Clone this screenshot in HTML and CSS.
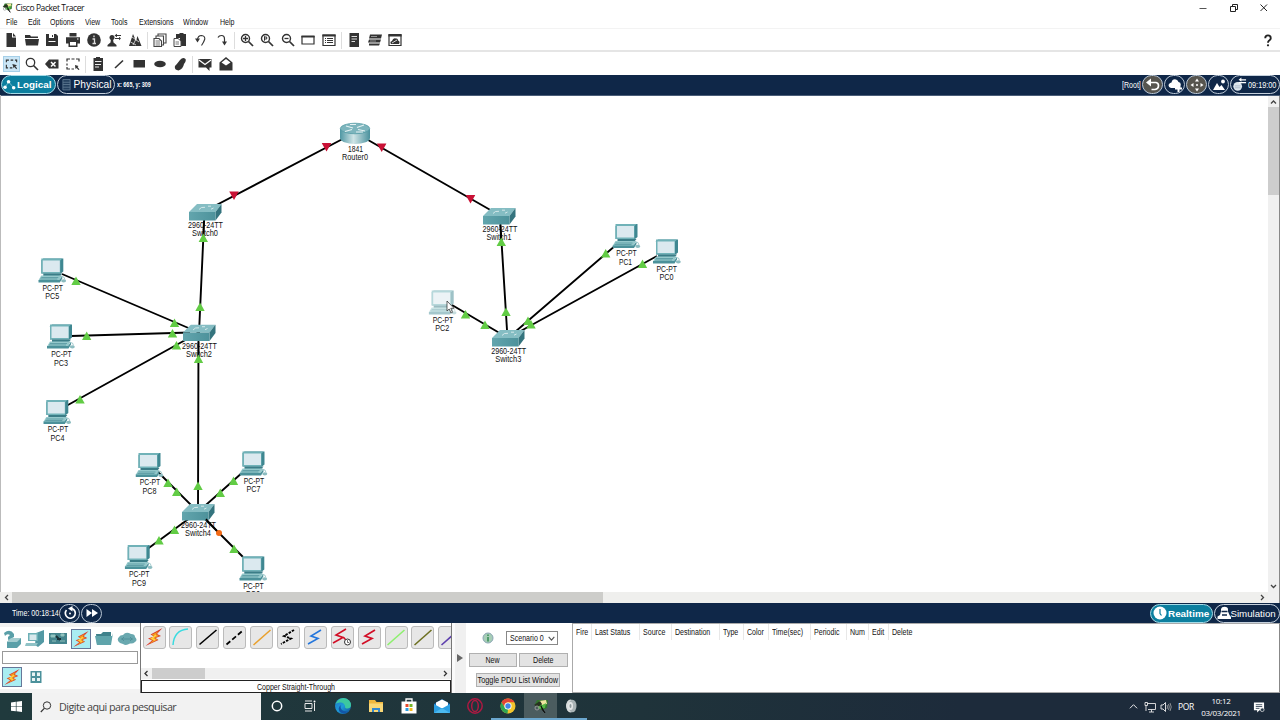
FILE: index.html
```html
<!DOCTYPE html>
<html lang="pt">
<head>
<meta charset="utf-8">
<title>Cisco Packet Tracer</title>
<link rel="stylesheet" href="styles.css">
</head>
<body>
<svg class="defs" aria-hidden="true">
  <defs>
    <linearGradient id="front" x1="0" x2="1"><stop offset="0" stop-color="#62a5ad"/><stop offset="1" stop-color="#4d929b"/></linearGradient>
    <linearGradient id="routerSide" x1="0" x2="1"><stop offset="0" stop-color="#4e97a3"/><stop offset=".45" stop-color="#cfe4e6"/><stop offset="1" stop-color="#4a919d"/></linearGradient>
    <linearGradient id="edgeG" x1="0" y1="0" x2="1" y2="1"><stop offset="0" stop-color="#1b72c4"/><stop offset=".5" stop-color="#1f9ad8"/><stop offset="1" stop-color="#0e4d94"/></linearGradient>
    <symbol id="pc" viewBox="0 0 30 28">
      <path d="M3 3 5 1H25V14L22.500 16H3Z" fill="#3f8791"/>
      <path d="M3 1H24L22 3V16H3Z" fill="#70b2b8"/>
      <path d="M4.500 3H21.500V14.500H4.500Z" fill="#dbe9ef"/>
      <path d="M5 16H24L22 18.500H5Z" fill="#3b7d87"/>
      <path d="M3 18 H23.500L21 23H0Z" fill="#94c8cb"/>
      <path d="M0 22.500H21L24 18.500V21L21.500 25H0Z" fill="#4b919a"/>
      <path d="M3 20H20M2 21.500H19" stroke="#4c8f99" stroke-width=".7"/>
      <path d="M21 18.500 25.500 19.500 26.500 22" fill="none" stroke="#8fc0c4" stroke-width=".8"/>
      <ellipse cx="25.300" cy="23.300" rx="2.500" ry="1.600" fill="#8cbcc0"/>
    </symbol>
    <symbol id="sw" viewBox="0 0 33 17">
      <path d="M0 8 8 0H32.500L26.500 8Z" fill="#85bdc3"/>
      <path d="M26.500 8 32.500 0V8.500L26.500 16.500Z" fill="#34747e"/>
      <path d="M0 8H26.500V16.500H0Z" fill="url(#front)"/>
      <path d="M10 5.500 12.500 3.500 16 3.300M19 2.200H22M22 5.200 24.500 4" fill="none" stroke="#dceced" stroke-width=".9"/>
    </symbol>
    <symbol id="bolt" viewBox="0 0 20 20">
      <path d="M18.500 1 6.500 7.500 10 9.500 4 11.500 8 13.500 1.500 19 14.500 13 11.500 11 17 9 13 7Z" fill="#d8372b"/>
      <path d="M15 4 7.500 7.800 11 9.500 5.500 11.500 9 13.500 5 17 13.500 12.800 10.500 11 15 9 12 7Z" fill="#f39a1f"/>
      <path d="M12 8 8 11.500 11 13" stroke="#ffd443" stroke-width="1.500" fill="none"/>
    </symbol>
    <symbol id="app" viewBox="0 0 16 16">
      <path d="M2 6 4 2 15 2 14 10 8 12Z" fill="#32772d"/>
      <path d="M6 3 13 2 14 6 9 7Z" fill="#efe6a0"/>
      <path d="M3 7 8 8 13 5 12 10 6 11Z" fill="#54b844"/>
      <path d="M1 7 7 3 9 6 5 9Z" fill="#27321f"/>
      <path d="M8 8 12 15 9.500 12Z" fill="#111" stroke="#111"/>
      <circle cx="4" cy="10" r="2" fill="none" stroke="#999"/>
    </symbol>
    <symbol id="lens" viewBox="0 0 14 14"><circle cx="5.500" cy="5.500" r="4" fill="none" stroke="#333" stroke-width="1.400"/><path d="M8.500 8.500 13 13" stroke="#333" stroke-width="1.700"/></symbol>
    <symbol id="up" viewBox="-5 -5 10 10"><path d="M0-4.500 4.700 4H-4.700Z" fill="#62cc45"/></symbol>
    <symbol id="down" viewBox="-5 -5 10 10"><path d="M0 4.500 4.800-4H-4.800Z" fill="#c91135"/></symbol>
  </defs>
</svg>

<div class="window">
  <header class="titlebar">
    <svg class="applogo"><use href="#app"/></svg>
    <span class="apptitle">Cisco Packet Tracer</span>
    <div class="winbtns">
      <svg viewBox="0 0 10 10"><path d="M1.500 5.500H8.500" stroke="#555"/></svg>
      <svg viewBox="0 0 10 10"><path d="M1.500 3.500H6.500V8.500H1.500ZM3.500 3.500V1.500H8.500V6.500H6.500" fill="none" stroke="#222"/></svg>
      <svg viewBox="0 0 10 10"><path d="M1.500 1.500 8 8M8 1.500 1.500 8" stroke="#222"/></svg>
    </div>
  </header>
  <nav class="menu">
    <span style="width:22px"><b class="t">File</b></span><span style="width:22px"><b class="t">Edit</b></span><span style="width:35px"><b class="t">Options</b></span><span style="width:26px"><b class="t">View</b></span><span style="width:28px"><b class="t">Tools</b></span><span style="width:44.500px"><b class="t">Extensions</b></span><span style="width:36.500px"><b class="t">Window</b></span><span><b class="t">Help</b></span>
  </nav>

  <div class="toolbar first">
    <i><svg viewBox="0 0 14 14"><path d="M2.500 0H8V4.500H12V14H2.500ZM9 0 12 3.500H9Z" fill="#333"/></svg></i>
    <i><svg viewBox="0 0 14 14"><path d="M0 2H5L6 3.500H13V5H0ZM0 6H14L13 12.500H1Z" fill="#333"/></svg></i>
    <i><svg viewBox="0 0 14 14"><path fill-rule="evenodd" d="M1 1H11L13 3V13H1ZM4 1V5H9V1ZM7 2H8V4H7ZM3.500 8V9H10.500V8Z" fill="#333"/></svg></i>
    <i><svg viewBox="0 0 14 14"><path fill-rule="evenodd" d="M3.500 0H10.500V3.500H3.500ZM0 4.300H14V10.500H11.500V14H2.500V10.500H0ZM4 9V12.500H10V9ZM11 5.500V6.500H12.500V5.500Z" fill="#333"/></svg></i>
    <i><svg viewBox="0 0 14 14"><circle cx="7" cy="7" r="6.800" fill="#333"/><path d="M7 2.500V4.300M5.500 6H7.500V10.500M5.500 10.500H9" stroke="#ddd" stroke-width="1.300" fill="none"/></svg></i>
    <i><svg viewBox="0 0 14 14"><circle cx="5" cy="4.500" r="2.500" fill="#333"/><path d="M4 6H6L6.500 9.500 9.500 12V13.500H.5V12L3.500 9.500Z" fill="#333"/><path d="M8.500 2.500H14M8 5.500H13" stroke="#333" stroke-width="1"/><path d="M10 .8 7.500 2.500 10 4.200ZM12 3.800 14 5.500 12 7.200Z" fill="#333"/></svg></i>
    <i><svg viewBox="0 0 14 14"><path d="M1 13 5 1 8 8 9.500 3 13.500 13Z" fill="#333"/><path d="M2.500 9 8 12M4 4 11 9M5 12 8 6" stroke="#fff" stroke-width=".7"/></svg></i>
    <s></s>
    <i><svg viewBox="0 0 14 14"><path d="M5 3V1H13V10H10.500M3 5V3H10.500V12H8.500M1 5.500H6L8.500 8V13.500H1Z" fill="#fff" stroke="#444" stroke-width="1.100"/><path d="M2.500 8H7M2.500 10H7M2.500 12H7" stroke="#777"/></svg></i>
    <i><svg viewBox="0 0 14 14"><path d="M3 1H6L7 0H10L11 1H13V13H7V5H3Z" fill="#333"/><path d="M1 5.500H5L8 8V13.500H1Z" fill="#fff" stroke="#444"/><path d="M2.500 9H6M2.500 11H6" stroke="#777"/></svg></i>
    <i><svg viewBox="0 0 14 14"><path d="M3.500 6.500Q4 2.500 7.500 2.500Q11 2.800 10.800 6Q10 9 7.500 12.500" fill="none" stroke="#333" stroke-width="1.100"/><path d="M1 5.500H6L3.500 9.500Z" fill="#333"/></svg></i>
    <i><svg viewBox="0 0 14 14"><path d="M3 4.500Q4 2.500 6.500 2.500Q9.500 2.500 9.500 6V10" fill="none" stroke="#333" stroke-width="1.200"/><path d="M7 8.500H12L9.500 12.500Z" fill="#333"/></svg></i>
    <s></s>
    <i><svg viewBox="0 0 14 14"><use href="#lens"/><path d="M3 5.500H8M5.500 3V8" stroke="#333" stroke-width="1.300"/></svg></i>
    <i><svg viewBox="0 0 14 14"><use href="#lens"/><path d="M4.500 3.300V7.700M4.500 4H6.700V6H4.500" stroke="#333" stroke-width="1" fill="none"/></svg></i>
    <i><svg viewBox="0 0 14 14"><use href="#lens"/><path d="M3.500 5.500H7.500" stroke="#333" stroke-width="1.300"/></svg></i>
    <i><svg viewBox="0 0 14 14"><path d="M1 3.500H13V11H1Z" fill="#fff" stroke="#333" stroke-width="1.200"/><path d="M.4 3.500H13.600" stroke="#333" stroke-width="2"/></svg></i>
    <i><svg viewBox="0 0 14 14"><path d="M1 2H13V12.500H1Z" fill="#fff" stroke="#333" stroke-width="1.200"/><path d="M.4 2.500H13.600" stroke="#333" stroke-width="2"/><path d="M3 5.500H4M3 7.500H4M3 9.500H4M5 5.500H11M5 7.500H11M5 9.500H11" stroke="#333"/></svg></i>
    <s></s>
    <i><svg viewBox="0 0 14 14"><path d="M2.500 0H12V14H2.500Z" fill="#333"/><path d="M4.500 3.500H10M4.500 6H10M4.500 8.500H8" stroke="#ddd"/></svg></i>
    <i><svg viewBox="0 0 14 14"><path d="M2 1.500H14L13 5.500H1ZM1 6.500H13L12 9.500H0ZM1 10.500H12L11 12.500H1Z" fill="#333"/><path d="M3 3.500H9M2 8H8" stroke="#aaa" stroke-width=".8"/></svg></i>
    <i><svg viewBox="0 0 14 14"><path d="M1 1.500H13V12.500H1Z" fill="#fff" stroke="#333" stroke-width="1.200"/><path d="M.4 2.500H13.600" stroke="#333" stroke-width="2"/><path d="M3 11Q1.500 8.500 4 8Q5 4.500 8 5.500Q10 5 10 7.500Q12.500 8.500 11 11Z" fill="#333"/><path d="M4 10 9 7" stroke="#fff" stroke-width=".8"/></svg></i>
    <span class="help"><svg viewBox="0 0 14 14"><path d="M4 4.500Q4 1.500 7 1.500Q10 1.500 10 4.500Q10 6 8 7.200Q7 8 7 9.500" fill="none" stroke="#222" stroke-width="2"/><circle cx="7" cy="12.200" r="1.200" fill="#222"/></svg></span>
  </div>
  <div class="toolbar">
    <i class="sel"><svg viewBox="0 0 14 14"><path d="M1 5V2.500H4M6 2.500H9M11 2.500H13V5M1 8V11.500H3M5 11.500H8" fill="none" stroke="#333" stroke-width="1.300"/><path d="M8 7 13.500 8.500 11.500 9.500 13.500 12 12.500 13 10.500 10.500 9.500 12Z" fill="#333"/></svg></i>
    <i><svg viewBox="0 0 14 14"><circle cx="5.500" cy="5.500" r="4.200" fill="none" stroke="#333" stroke-width="1.300"/><path d="M8.500 8.500 13 13" stroke="#333" stroke-width="1.600"/></svg></i>
    <i><svg viewBox="0 0 14 14"><path d="M0 7 4 2.500H13.500V11.500H4Z" fill="#333"/><path d="M6 5 10.500 9.500M10.500 5 6 9.500" stroke="#fff" stroke-width="1.500"/></svg></i>
    <i><svg viewBox="0 0 14 14"><path d="M1 4.500V2H4M5.500 2H8.500M10 2H13V4.500M1 6.500V8.500M1 10V12H4M5.500 12H8" fill="none" stroke="#333" stroke-width="1.200"/><path d="M9 8 12.500 9 11.500 10 13.500 12.500 12.500 13 10.500 11 9.500 12Z" fill="#333"/></svg></i>
    <s></s>
    <i><svg viewBox="0 0 14 14"><path d="M2.500 1H5V0H9V1H12V14H2.500Z" fill="#333"/><path d="M4 4.500H10.500M4 7.500H10M4 10H8" stroke="#eee" stroke-width="1.100"/></svg></i>
    <i><svg viewBox="0 0 14 14"><path d="M3 11 11 3.500" stroke="#333" stroke-width="1.600"/></svg></i>
    <i><svg viewBox="0 0 14 14"><path d="M1.500 3H13V10.500H1.500Z" fill="#333"/></svg></i>
    <i><svg viewBox="0 0 14 14"><ellipse cx="7" cy="7" rx="5.800" ry="3.300" fill="#333"/></svg></i>
    <i><svg viewBox="0 0 14 14"><path d="M7 3Q10-.5 12.500 2Q13.500 4 11 7Q10 12 5.500 13.500Q1 13 2 9Q4 7 7 3Z" fill="#333"/></svg></i>
    <s></s>
    <i><svg viewBox="0 0 14 14"><path d="M.5 2H13.500V10.500H11.500V14L8 10.500H.5Z" fill="#333"/><path d="M1 3 7 7.500 13 3" stroke="#fff" stroke-width="1.300" fill="none"/></svg></i>
    <i><svg viewBox="0 0 14 14"><path d="M.5 5.500 7 0 13.500 5.500V13.500H.5Z" fill="#333"/><path d="M2.500 5.500 7 2 11.500 5.500 7 8.500Z" fill="#fff"/></svg></i>
  </div>

  <div class="navy nav">
    <div class="pill on logical"><svg viewBox="0 0 14 12"><path d="M2 9 6 2.500 11.500 9" fill="none" stroke="#9fd3e0" stroke-width=".7"/><circle cx="2.200" cy="8.500" r="1.900" fill="#fff"/><circle cx="6" cy="2.500" r="1.900" fill="#fff"/><circle cx="11.500" cy="9" r="1.900" fill="#fff"/></svg>Logical</div>
    <div class="pill physical"><svg viewBox="0 0 10 13"><path d="M1 1H9V12.500H1Z" fill="#24405f" stroke="#5c7790"/><path d="M1 4H9M1 6.500H9M1 9.500H9" stroke="#5c7790"/></svg>Physical</div>
    <b class="t coord">x: 665, y: 309</b>
    <div class="navright">
      <b class="t root">[Root]</b>
      <div class="round gray"><svg viewBox="0 0 14 14"><path d="M3 4.500H10Q12.500 5 12.500 7.500Q12.500 11 9 11.500H5.500" fill="none" stroke="#fff" stroke-width="1.700"/><path d="M5 .5V8.500L0 4.500Z" fill="#fff"/></svg></div>
      <div class="round"><svg viewBox="0 0 14 14"><path d="M3 10Q-.5 9 1 6Q2 4.500 3.500 4.500Q4.500 .5 8 1.500Q10 2 10.500 4Q13.500 4.500 12.500 8V10Z" fill="#fff"/><path d="M10.500 7V14M7 10.500H14" stroke="#fff" stroke-width="2"/></svg></div>
      <div class="round gray"><svg viewBox="0 0 14 14"><path d="M7 .5 9 3.500H5ZM7 13.500 5 10.500H9ZM.5 7 3.500 5V9ZM13.500 7 10.500 9V5Z" fill="#fff"/><circle cx="7" cy="7" r="1" fill="#fff"/></svg></div>
      <div class="round"><svg viewBox="0 0 14 14"><path d="M1 12 5 5 7.500 9 9.500 7 13 12Z" fill="#fff"/><circle cx="11" cy="3.500" r="1.900" fill="#fff"/></svg></div>
      <div class="pill clock"><svg viewBox="0 0 15 15"><circle cx="5" cy="9.500" r="4.700" fill="#dce5ec"/><path d="M2 9H8M2 11H8" stroke="#9aaabb" stroke-width=".7"/><path d="M6 5.500H14M8 2.500H14" stroke="#fff" stroke-width="1.200"/><path d="M9 0 6 2.500 9 4.500Z" fill="#fff"/></svg><b class="t">09:19:00</b></div>
    </div>
  </div>

  <main class="work">
    <svg class="canvas" viewBox="0 95 1268 497">
      <path d="M.5 95V592" stroke="#bbb"/>
      <g class="labels">
        <text x="355.500" y="151.800" textLength="15" lengthAdjust="spacingAndGlyphs">1841</text><text x="355" y="160.200" textLength="26" lengthAdjust="spacingAndGlyphs">Router0</text>
      </g>
      <path class="links" d="M355 132.500 205 211M355 132.500 500 215.500M204.500 212 199 333M500 217 507.500 338M198.500 333 198 512M62 274 199 332.500M71 336 190 332.500M67 405.500 198 333M616 245 508 338M657 256 508 338M452 305 508 338M158 472 198 512M243 472 198 512M146 550 198 512M198 512 243 557"/>
      <g>
        <path d="M340 129V138A15 6 0 0 0 370 138V129Z" fill="url(#routerSide)"/>
        <ellipse cx="355" cy="128.500" rx="14.700" ry="5.300" fill="#7db5bd" stroke="#4f98a2" stroke-width=".7"/>
        <path d="M346 126 353 128M350 124.500H356M364 125 357 127.500M345 131.500 352 129.500M365 131 358 129.500M356 132H363" fill="none" stroke="#e5f2f3" stroke-width="1.100"/>
      </g>
      <g>
        <use href="#sw" x="189" y="204" width="33" height="17"/><use href="#sw" x="483" y="208" width="33" height="17"/><use href="#sw" x="183" y="324.500" width="33" height="17"/><use href="#sw" x="492" y="330" width="33" height="17"/><use href="#sw" x="182" y="504" width="33" height="17"/>
      </g>
      <g>
        <use href="#pc" x="38.300" y="257.500" width="30" height="28"/><use href="#pc" x="47" y="323.500" width="30" height="28"/><use href="#pc" x="43.300" y="399" width="30" height="28"/><use href="#pc" x="135.500" y="452" width="30" height="28"/><use href="#pc" x="239.500" y="450.500" width="30" height="28"/><use href="#pc" x="124.700" y="544" width="30" height="28"/><use href="#pc" x="239.300" y="555.500" width="30" height="28"/><use href="#pc" x="612.500" y="223" width="30" height="28"/><use href="#pc" x="653" y="238.500" width="30" height="28"/><use href="#pc" x="428.700" y="289.500" width="30" height="28" opacity=".5"/>
      </g>
      <g class="labels">
        <text x="205.500" y="227.800" textLength="35" lengthAdjust="spacingAndGlyphs">2960-24TT</text><text x="205" y="236.300" textLength="26" lengthAdjust="spacingAndGlyphs">Switch0</text>
        <text x="500" y="232" textLength="35" lengthAdjust="spacingAndGlyphs">2960-24TT</text><text x="499" y="240.300" textLength="25" lengthAdjust="spacingAndGlyphs">Switch1</text>
        <text x="199.500" y="348.500" textLength="35" lengthAdjust="spacingAndGlyphs">2960-24TT</text><text x="199" y="357" textLength="26" lengthAdjust="spacingAndGlyphs">Switch2</text>
        <text x="508.700" y="354" textLength="35" lengthAdjust="spacingAndGlyphs">2960-24TT</text><text x="508.300" y="362.300" textLength="26" lengthAdjust="spacingAndGlyphs">Switch3</text>
        <text x="198.500" y="528" textLength="35" lengthAdjust="spacingAndGlyphs">2960-24TT</text><text x="198" y="536.300" textLength="26" lengthAdjust="spacingAndGlyphs">Switch4</text>
        <text x="52.700" y="291" textLength="20.500" lengthAdjust="spacingAndGlyphs">PC-PT</text><text x="52.300" y="299.300" textLength="14" lengthAdjust="spacingAndGlyphs">PC5</text>
        <text x="61.500" y="357" textLength="20.500" lengthAdjust="spacingAndGlyphs">PC-PT</text><text x="61" y="365.500" textLength="14" lengthAdjust="spacingAndGlyphs">PC3</text>
        <text x="58" y="432" textLength="20.500" lengthAdjust="spacingAndGlyphs">PC-PT</text><text x="57.500" y="440.500" textLength="14" lengthAdjust="spacingAndGlyphs">PC4</text>
        <text x="150" y="485" textLength="20.500" lengthAdjust="spacingAndGlyphs">PC-PT</text><text x="149.500" y="493.500" textLength="14" lengthAdjust="spacingAndGlyphs">PC8</text>
        <text x="254" y="483.500" textLength="20.500" lengthAdjust="spacingAndGlyphs">PC-PT</text><text x="253.500" y="492" textLength="14" lengthAdjust="spacingAndGlyphs">PC7</text>
        <text x="139.300" y="577" textLength="20.500" lengthAdjust="spacingAndGlyphs">PC-PT</text><text x="139" y="585.500" textLength="14" lengthAdjust="spacingAndGlyphs">PC9</text>
        <text x="253.500" y="588.500" textLength="20.500" lengthAdjust="spacingAndGlyphs">PC-PT</text><text x="253" y="596.500" textLength="14" lengthAdjust="spacingAndGlyphs">PC6</text>
        <text x="626.500" y="256" textLength="20.500" lengthAdjust="spacingAndGlyphs">PC-PT</text><text x="625.500" y="264.500" textLength="13" lengthAdjust="spacingAndGlyphs">PC1</text>
        <text x="666.800" y="271.500" textLength="20.500" lengthAdjust="spacingAndGlyphs">PC-PT</text><text x="666.500" y="280" textLength="14" lengthAdjust="spacingAndGlyphs">PC0</text>
        <text x="443" y="322.500" textLength="20.500" lengthAdjust="spacingAndGlyphs">PC-PT</text><text x="442.300" y="331" textLength="14" lengthAdjust="spacingAndGlyphs">PC2</text>
      </g>
      <path class="links thin" d="M203.800 221 203.300 238M500.300 225 501 242M198.500 342V359M206 519 219 533"/>
      <g>
        <use href="#up" x="198.300" y="233" width="10" height="10"/><use href="#up" x="195" y="302" width="10" height="10"/><use href="#up" x="496.300" y="237" width="10" height="10"/><use href="#up" x="501" y="307" width="10" height="10"/><use href="#up" x="460.500" y="309.500" width="10" height="10"/><use href="#up" x="480" y="320" width="10" height="10"/><use href="#up" x="600.700" y="248.500" width="10" height="10"/><use href="#up" x="637.500" y="259" width="10" height="10"/><use href="#up" x="523" y="316" width="10" height="10"/><use href="#up" x="526" y="319.500" width="10" height="10"/><use href="#up" x="71" y="276" width="10" height="10"/><use href="#up" x="169.500" y="318" width="10" height="10"/><use href="#up" x="81.700" y="331" width="10" height="10"/><use href="#up" x="167.500" y="328.500" width="10" height="10"/><use href="#up" x="75" y="394.500" width="10" height="10"/><use href="#up" x="171.500" y="340.500" width="10" height="10"/><use href="#up" x="193.500" y="354" width="10" height="10"/><use href="#up" x="193" y="481" width="10" height="10"/><use href="#up" x="163" y="478" width="10" height="10"/><use href="#up" x="171.700" y="487" width="10" height="10"/><use href="#up" x="228.500" y="476" width="10" height="10"/><use href="#up" x="215.300" y="488" width="10" height="10"/><use href="#up" x="169.500" y="525" width="10" height="10"/><use href="#up" x="154" y="535.500" width="10" height="10"/><use href="#up" x="229" y="544" width="10" height="10"/>
        <circle cx="219" cy="533" r="3" fill="#f26a16"/>
        <use href="#down" x="321.500" y="142" width="10" height="10"/><use href="#down" x="229" y="190.500" width="10" height="10"/><use href="#down" x="376.700" y="142.500" width="10" height="10"/><use href="#down" x="465.500" y="194" width="10" height="10"/>
      </g>
      <path d="M447 301V311L449.200 309 451 313 452.500 312.300 450.800 308.300H454Z" fill="#fff" stroke="#222" stroke-width=".7"/>
    </svg>
    <div class="vscroll">
      <svg viewBox="0 0 11 11"><path d="M3 7.500 5.500 5 8 7.500" fill="none" stroke="#444" stroke-width="1.300"/></svg>
      <div class="vthumb"></div>
      <svg class="end" viewBox="0 0 11 11"><path d="M3 4 5.500 6.500 8 4" fill="none" stroke="#444" stroke-width="1.300"/></svg>
    </div>
    <div class="hscroll">
      <svg viewBox="0 0 11 11"><path d="M7 3 4.500 5.500 7 8" fill="none" stroke="#444" stroke-width="1.300"/></svg>
      <div class="hthumb"></div>
      <svg class="end" viewBox="0 0 11 11"><path d="M4 3 6.500 5.500 4 8" fill="none" stroke="#444" stroke-width="1.300"/></svg>
    </div>
    <div class="corner"></div>
  </main>

  <div class="navy timebar">
    <span class="time"><b class="t">Time: 00:18:14</b></span>
    <div class="round"><svg viewBox="0 0 14 14"><path d="M3.500 4A5 5 0 1 0 9 2.500" fill="none" stroke="#fff" stroke-width="1.700"/><path d="M9.500 0 5 2.500 9.500 5.500Z" fill="#fff"/><circle cx="7" cy="7.500" r="1" fill="#fff"/></svg></div>
    <div class="round"><svg viewBox="0 0 14 14"><path d="M1.500 3 7 7 1.500 11ZM7 3 13 7 7 11Z" fill="#fff"/></svg></div>
    <div class="modes">
      <div class="pill on realtime"><svg viewBox="0 0 14 14"><circle cx="7" cy="7" r="6.500" fill="#fff"/><path d="M7 3V7.500L8.500 9.500" fill="none" stroke="#0c7c9a" stroke-width="1.200"/></svg>Realtime</div>
      <div class="pill simulation"><svg viewBox="0 0 14 14"><path d="M4 5.500V3Q4.500 .8 7.500 .8Q11 .8 11 3.500V5.500L12.500 9L14 11V13H.5V10.500L3 9Z" fill="#fff"/><path d="M4.500 5.500H10.500M5 9H10" stroke="#12294a" stroke-width="1.300"/></svg>Simulation</div>
    </div>
  </div>

  <section class="bottom">
    <div class="devices">
      <div class="devrow">
        <svg viewBox="0 0 20 20"><path d="M2 4Q8-1 12 5V8L6 11V8L8 6Q5 4 3 7ZM5 13 9 9H19V15L15 19H5Z" fill="#5a9fa8"/><path d="M5 13 9 9H19L15 13Z" fill="#a5cdd0"/></svg>
        <svg viewBox="0 0 20 20"><path d="M11 4 19 1V13L13 18 10 16Z" fill="#5399a4"/><path d="M3 4H13V12H3Z" fill="#6db0b6"/><path d="M4.500 5.500H11.500V11H4.500Z" fill="#d9e8ec"/><path d="M1 14H13L11 17H0Z" fill="#8fc2c6"/></svg>
        <svg viewBox="0 0 20 20"><path d="M1 4H19V15H1Z" fill="#44848d"/><path d="M3 6H7V8H3ZM13 5H16V7H13ZM4 12H8M12 12H17" fill="#93c8c8" stroke="#8fbfba"/><path d="M8 7 12 11M9 10H13" stroke="#192f35" stroke-width="1.800"/></svg>
        <svg class="chosen" viewBox="0 0 20 20"><use href="#bolt"/></svg>
        <svg viewBox="0 0 20 20"><path d="M2 5H7L9 3H17V16H3Z" fill="#3f828c"/><path d="M1 7H18L19 4 17 16H3Z" fill="#5fa4ab"/></svg>
        <svg viewBox="0 0 20 20"><path d="M3 14Q-1 11 2 8Q3 6 6 6Q9 2 14 5Q18 5 18 8Q21 11 18 13Q16 15 13 14.500Q9 17 6 15Z" fill="#69a8af"/><path d="M4 10H16M7 8 5 10 7 12M13 8 15 10 13 12" fill="none" stroke="#4b8c95" stroke-width=".8"/></svg>
      </div>
      <div class="field"></div>
      <div class="devrow two">
        <svg class="chosen" viewBox="0 0 20 20"><use href="#bolt"/></svg>
        <svg viewBox="0 0 20 20"><path d="M4.500 4H15.500V16H4.500Z" fill="#4b919b"/><path d="M6 5.500H9V9H6ZM11 5.500H14V9H11ZM6 11H9V14H6ZM11 11H14V14H11Z" fill="#e9f5f5"/></svg>
      </div>
    </div>
    <div class="cables">
      <div class="cablerow">
        <i><svg viewBox="0 0 20 20"><use href="#bolt"/></svg></i>
        <i><svg viewBox="0 0 20 20"><path d="M2 18Q3 3 17 2" stroke="#3adbe0" stroke-width="1.500" fill="none"/></svg></i>
        <i><svg viewBox="0 0 20 20"><path d="M1.500 17.500 18.500 3" stroke="#000" stroke-width="1.600" fill="none"/></svg></i>
        <i><svg viewBox="0 0 20 20"><path d="M1.500 17.500 18.500 3" stroke="#000" stroke-width="1.700" fill="none" stroke-dasharray="5 2.500"/></svg></i>
        <i><svg viewBox="0 0 20 20"><path d="M1.500 18 18.500 3" stroke="#e9a02c" stroke-width="1.500" fill="none"/></svg></i>
        <i><svg viewBox="0 0 20 20"><path d="M16 3 6 9 13 11.500 3 17" stroke="#000" stroke-width="1.900" fill="none" stroke-dasharray="2.500 1.200"/></svg></i>
        <i><svg viewBox="0 0 20 20"><path d="M16 3 6 9 13 11.500 3 17" stroke="#2476dc" stroke-width="1.600" fill="none"/></svg></i>
        <i><svg viewBox="0 0 20 20"><path d="M14 2 4 8 11 10.500 1 16M11 10 14 13" stroke="#d20e26" stroke-width="1.600" fill="none"/><circle cx="15.500" cy="15" r="3" fill="#fff" stroke="#333"/><path d="M15.500 13V15.500H17" fill="none" stroke="#333" stroke-width=".7"/></svg></i>
        <i><svg viewBox="0 0 20 20"><path d="M16 3 6 9 13 11.500 3 17" stroke="#d20e26" stroke-width="1.700" fill="none"/></svg></i>
        <i><svg viewBox="0 0 20 20"><path d="M1.500 18 18.500 3" stroke="#8df06e" stroke-width="1.600" fill="none"/></svg></i>
        <i><svg viewBox="0 0 20 20"><path d="M1.500 18 18.500 3" stroke="#6d7021" stroke-width="1.600" fill="none"/></svg></i>
        <i><svg viewBox="0 0 20 20"><path d="M1.500 18 18.500 3" stroke="#5d3fae" stroke-width="1.600" fill="none"/></svg></i>
      </div>
      <div class="cscroll">
        <svg viewBox="0 0 11 11"><path d="M6.500 3 4 5.500 6.500 8" fill="none" stroke="#333" stroke-width="1.300"/></svg>
        <div class="cthumb"></div>
        <svg class="end" viewBox="0 0 11 11"><path d="M4 3 6.500 5.500 4 8" fill="none" stroke="#333" stroke-width="1.300"/></svg>
      </div>
      <div class="cname"><b class="t mid">Copper Straight-Through</b></div>
    </div>
    <div class="splitter"><svg viewBox="0 0 6 8"><path d="M0 0 6 4 0 8Z" fill="#666"/></svg></div>
    <div class="scenario">
      <div class="srow">
        <svg class="info" viewBox="0 0 12 12"><circle cx="6" cy="6" r="5" fill="#a6cdb6" stroke="#8aa5b4"/><path d="M6 2.500V4M6 5V9.500" stroke="#3b8f5a" stroke-width="1.600"/></svg>
        <div class="select"><b class="t">Scenario 0</b><svg viewBox="0 0 8 8"><path d="M1.500 2.500 4 5.500 6.500 2.500" fill="none" stroke="#555"/></svg></div>
      </div>
      <div class="srow btns"><div class="btn"><b class="t mid">New</b></div><div class="btn"><b class="t mid">Delete</b></div></div>
      <div class="btn toggle"><b class="t mid">Toggle PDU List Window</b></div>
    </div>
    <div class="pdu">
      <span style="width:18.500px"><b class="t">Fire</b></span><span style="width:48px"><b class="t">Last Status</b></span><span style="width:32px"><b class="t">Source</b></span><span style="width:48px"><b class="t">Destination</b></span><span style="width:24px"><b class="t">Type</b></span><span style="width:25px"><b class="t">Color</b></span><span style="width:42px"><b class="t">Time(sec)</b></span><span style="width:36px"><b class="t">Periodic</b></span><span style="width:22px"><b class="t">Num</b></span><span style="width:20px"><b class="t">Edit</b></span><span class="last"><b class="t">Delete</b></span>
    </div>
  </section>

  <footer class="taskbar">
    <div class="start"><svg viewBox="0 0 12 12"><path d="M0 1.500 5.300 .8V5.600H0ZM6 .7 12 0V5.600H6ZM0 6.400H5.300V11.200L0 10.500ZM6 6.400H12V12L6 11.300Z" fill="#fff"/></svg></div>
    <div class="search"><svg viewBox="0 0 12 12"><circle cx="7" cy="4.500" r="3.700" fill="none" stroke="#333"/><path d="M4.300 7.300 .8 11" stroke="#333" stroke-width="1.200"/></svg><span>Digite aqui para pesquisar</span></div>
    <div class="tasks">
      <i><svg viewBox="0 0 18 18"><circle cx="9" cy="9" r="4.700" fill="none" stroke="#fff" stroke-width="1.500"/></svg></i>
      <i><svg viewBox="0 0 18 18"><path d="M4 4H11M4 14H11M4 6.500H11V11.500H4ZM13.500 6V14" fill="none" stroke="#e8e8e8"/><circle cx="13.500" cy="4.500" r="1" fill="#fff"/></svg></i>
      <i><svg viewBox="0 0 18 18"><circle cx="9" cy="9" r="8" fill="url(#edgeG)"/><path d="M1.500 7Q4 1 9.500 1Q17 2 17 8.500Q16.500 12 12.500 11.500Q10.500 11 11 9Q10 5 6 5.500Q3 5.500 1.500 7Z" fill="#3cc7a0"/><path d="M6.500 8Q6 15 14 14.500Q10 18 6 15Q3 12 6.500 8Z" fill="#1256a8"/></svg></i>
      <i><svg viewBox="0 0 18 18"><path d="M2 3H8L9.500 5H16V15H2Z" fill="#efb73e"/><path d="M2 6.500H16V15H2Z" fill="#f9d877"/><path d="M5 15V11H13V15H11V13H7V15Z" fill="#3388ce"/></svg></i>
      <i><svg viewBox="0 0 18 18"><path d="M6 5V2H12V5" fill="none" stroke="#fff" stroke-width="1.300"/><path d="M1.500 4.500H16.500V16.500H1.500Z" fill="#fff"/><path d="M5.500 7H8.500V10H5.500Z" fill="#e84b2c"/><path d="M9.500 7H12.500V10H9.500Z" fill="#75b72a"/><path d="M5.500 11H8.500V14H5.500Z" fill="#2a9de0"/><path d="M9.500 11H12.500V14H9.500Z" fill="#f5b91d"/></svg></i>
      <i><svg viewBox="0 0 18 18"><path d="M1 7 9 2 17 7V16H1Z" fill="#1767ae"/><path d="M3 5.500 9 2.500 15 5.500V11H3Z" fill="#fff"/><path d="M1 7 9 11.500 17 7V16H1Z" fill="#2c9fe2"/><path d="M1 16 9 11 17 16Z" fill="#4bb9ef"/></svg></i>
      <i><svg viewBox="0 0 18 18"><circle cx="9" cy="9" r="7.200" fill="none" stroke="#ad1942" stroke-width="1.500"/><ellipse cx="9" cy="9" rx="3.300" ry="5.500" fill="none" stroke="#ad1942" stroke-width="1.500"/></svg></i>
      <i class="run"><svg viewBox="0 0 18 18"><circle cx="9" cy="9" r="7.500" fill="#f2c52d"/><path d="M2.500 5.200A7.500 7.500 0 0 1 15.500 5.200H9Q5.500 5.500 5.300 10Z" fill="#e34435"/><path d="M2.500 5.200 6 11 9 12.500 8.500 16.500A7.500 7.500 0 0 1 2.500 5.200Z" fill="#2fa552"/><circle cx="9" cy="9" r="3.600" fill="#fff"/><circle cx="9" cy="9" r="2.700" fill="#4285e4"/></svg></i>
      <i class="run active"><svg viewBox="-1 -1 18 18"><use href="#app" width="16" height="16"/></svg></i>
      <i class="run late"><svg viewBox="0 0 18 18"><ellipse cx="7.500" cy="9" rx="4.500" ry="6.500" fill="#d8dcdd"/><ellipse cx="9.500" cy="9" rx="4" ry="6.300" fill="#a9b3b5"/><ellipse cx="7.500" cy="9" rx="2.500" ry="4" fill="#e4e7e8"/><ellipse cx="7.500" cy="9" rx="1" ry="2" fill="#8d999b"/></svg></i>
    </div>
    <div class="tray">
      <svg class="chev" viewBox="0 0 10 10"><path d="M1 7 5 3 9 7" fill="none" stroke="#fff"/></svg>
      <svg class="net" viewBox="0 0 12 12"><path d="M3.500 2.500H11.500V8.500H4M5 11H10M7.500 8.500V11M1 1.500H3.500V4.500H1ZM2 4.500V10" fill="none" stroke="#e8e8e8" stroke-width=".9"/></svg>
      <svg class="vol" viewBox="0 0 12 12"><path d="M1 4H3L5.500 1.500V10.500L3 8H1Z" fill="none" stroke="#eee" stroke-width=".9"/><path d="M7 4Q8 6 7 8M8.500 3Q10 6 8.500 9M10 2Q12.500 6 10 10" fill="none" stroke="#aaa" stroke-width=".8"/></svg>
      <span class="lang">POR</span>
      <div class="date"><span>10:12</span><span>03/03/2021</span></div>
      <svg class="note" viewBox="0 0 13 13"><path d="M1 1.500H12V10H7L4.500 12.500V10H1Z" fill="#fff"/><path d="M3 4H10M3 6H10M3 8H7" stroke="#25384a" stroke-width=".9"/><circle cx="10" cy="9.500" r="2" fill="#25384a" stroke="#ddd" stroke-width=".8"/></svg>
    </div>
  </footer>
</div>
</body>
</html>
```
FILE: styles.css
```css
* { box-sizing: border-box; }
body { margin: 0; font-family: "Liberation Sans", sans-serif; font-size: 8.5px; color: #111; background: #fff; }
.defs { display: block; width: 0; height: 0; }
.window { width: 1280px; height: 720px; display: flex; flex-direction: column; overflow: hidden; }
svg { display: block; flex: none; }
i { font-style: normal; }
.t { display: block; flex: none; font-weight: normal; white-space: nowrap; transform: scaleX(.83); transform-origin: 0 50%; }
.t.mid { transform-origin: 50% 50%; }

.titlebar { height: 15px; flex: none; display: flex; align-items: center; padding-left: 2px; }
.applogo { width: 11px; height: 11px; }
.apptitle { font-family: "Open Sans", sans-serif; font-size: 8.500px; letter-spacing: -.42px; margin-left: 2.500px; }
.winbtns { margin-left: auto; display: flex; gap: 20.500px; padding-right: 11px; }
.winbtns svg { width: 10px; height: 10px; }
.menu { height: 13px; flex: none; display: flex; align-items: center; padding: 1px 0 0 5.500px; }

.toolbar { height: 23px; flex: none; display: flex; align-items: center; padding: 1px 0 0 1px; }
.toolbar.first { height: 24px; border-top: 1px solid #f3f3f3; border-bottom: 2px solid #e5e5e5; }
.toolbar i { width: 20.600px; display: flex; justify-content: center; }
.toolbar i svg { width: 14px; height: 14px; }
.toolbar s { width: 1px; height: 17px; margin: 0 1.700px; background: #ddd; }
.toolbar .sel svg { width: 17px; height: 16px; padding: 1px; background: #cbe6f6; border: 1px solid #a5cfe8; }
.help { margin-left: auto; margin-right: 5px; }
.help svg { width: 14px; height: 13px; }

.navy { background: #0f2748; color: #fff; display: flex; align-items: center; }
.nav { height: 20.500px; flex: none; border-bottom: 1px solid #4a5d78; padding-left: .5px; }
.pill { height: 19px; border: 1px solid #c5d0dc; border-radius: 9.500px; display: flex; align-items: center; font-size: 10.200px; white-space: nowrap; }
.pill.on { background: #0c7f9f; border-color: #a5dbe7; font-weight: bold; font-size: 9.900px; }
.logical { width: 55px; padding-left: 1.500px; gap: 1px; }
.logical svg { width: 13px; height: 12px; }
.physical { width: 58px; margin-left: 1px; padding-left: 4px; gap: 3px; }
.physical svg { width: 9px; height: 13px; }
.coord { font-size: 6.800px; margin-left: 2.500px; font-weight: bold; transform: scaleX(.8); }
.navright { margin-left: auto; display: flex; align-items: center; }
.root { width: 20px; }
.round { width: 21px; height: 19px; border: 1px solid #b9c6d4; border-radius: 10px; margin-right: 1px; display: flex; align-items: center; justify-content: center; }
.round svg { width: 14px; height: 14px; }
.gray { background: #57554f; }
.clock { width: 50px; padding-left: 2px; }
.clock svg { width: 14px; height: 15px; }
.clock .t { font-size: 8.800px; margin-left: 1px; }

.work { height: 507.500px; flex: none; display: grid; grid-template-columns: 1268px 12px; grid-template-rows: 496.500px 11px; }
.canvas { width: 1268px; height: 497px; overflow: hidden; margin-top: -.5px; }
.labels text { font-size: 8.500px; text-anchor: middle; fill: #111; }
.links { fill: none; stroke: #000; stroke-width: 1.900; }
.links.thin { stroke-width: 1.500; }
.vscroll { background: #f0f0f0; border-right: 1px solid #888; display: flex; flex-direction: column; }
.vscroll svg, .hscroll svg, .cscroll svg { width: 11px; height: 11px; }
.vthumb { height: 88px; background: #cdcdcd; }
.vscroll .end { margin-top: auto; }
.hscroll { background: #efefed; display: flex; padding-left: 1px; }
.hthumb { width: 591px; background: #cdcdca; }
.hscroll .end, .cscroll .end { margin-left: auto; }
.corner { background: #f0f0f0; border-right: 1px solid #888; }

.timebar { height: 20px; flex: none; }
.time { width: 59px; padding-left: 12px; }
.modes { margin-left: auto; display: flex; gap: 1px; }
.realtime { width: 63px; padding-left: 2px; gap: 1px; }
.realtime svg, .simulation svg { width: 14px; height: 14px; }
.simulation { width: 66px; padding-left: 1.500px; font-size: 9.700px; }

.bottom { height: 70px; flex: none; display: flex; background: #fff; }
.devices { width: 140px; border-top: 4px solid #f2f2f2; border-bottom: 4px solid #f3f3f3; background: #fff; padding: 1.500px 2px 0; }
.devrow { display: flex; gap: 3px; height: 21px; align-items: center; }
.devrow svg { width: 20px; height: 20px; }
.chosen { background: #a9edf2; border: 1px solid #679; }
.field { width: 136px; height: 13px; border: 1px solid #999; margin: 1.500px 0 2px; }
.two { gap: 4px; }
.cables { width: 312px; border-left: 1px solid #777; border-right: 1px solid #777; display: flex; flex-direction: column; overflow: hidden; }
.cablerow { height: 45px; display: flex; gap: 3.900px; padding: 3px 0 0 1.500px; overflow: hidden; }
.cablerow i { flex: none; width: 23px; height: 22.500px; border: 1px solid #bbb; border-radius: 3px; background: #e7e7e7; display: flex; align-items: center; justify-content: center; }
.cablerow svg { width: 20px; height: 20px; }
.cscroll { height: 11px; background: #f0f0f0; display: flex; }
.cthumb { width: 53px; background: #cdcdcd; }
.cname { height: 13px; margin-top: 1px; border: 1px solid #222; display: flex; align-items: center; justify-content: center; padding-top: 1px; }
.splitter { width: 14px; background: #f0f0f0; border-left: 3px solid #fafafa; display: flex; align-items: center; padding-left: 2px; }
.splitter svg { width: 6px; height: 8px; }
.scenario { width: 106px; padding: 8px 0 0 2.500px; }
.srow { display: flex; align-items: center; }
.info { width: 12px; height: 12px; margin: 0 12.500px 0 13px; }
.select { width: 52px; height: 14px; border: 1px solid #888; display: flex; align-items: center; padding-left: 3px; }
.select .t { width: 37px; }
.select svg { width: 9px; height: 9px; }
.btns { gap: 2px; margin: 8px 0 6px; }
.btn { width: 48.500px; height: 14px; background: #e3e3e3; border: 1px solid #b0b0b0; display: flex; align-items: center; justify-content: center; }
.toggle { width: 84px; margin-left: 7.500px; }
.toggle .mid { transform: scaleX(.86); }
.pdu { flex: 1; border: 1px solid #aaa; border-right-color: #888; display: flex; align-items: flex-start; }
.pdu span { height: 16px; padding: 3px 0 0 3px; border-right: 1px solid #e8e8e8; }
.pdu span:first-child { padding-left: 2.500px; }
.pdu .last { border: 0; }

.taskbar { height: 27px; flex: none; display: flex; background: linear-gradient(90deg, #203a3d, #1f333a 50%, #1d2b3b 75%, #1d2b3b); color: #fff; font-family: "Open Sans", "Noto Sans", sans-serif; }
.start { width: 32px; display: flex; align-items: center; justify-content: center; }
.start svg { width: 11px; height: 11px; }
.search { width: 229px; background: #f2f2f2; color: #444; display: flex; align-items: center; padding-left: 8px; gap: 7px; font-size: 10.800px; letter-spacing: -.56px; white-space: nowrap; }
.search svg { width: 12px; height: 12px; }
.tasks { display: flex; }
.tasks i { width: 32.900px; display: flex; align-items: center; justify-content: center; border-bottom: 2px solid transparent; }
.tasks svg { width: 18px; height: 18px; margin-top: 1px; }
.tasks .run { border-bottom-color: #6ba7cf; }
.tasks .active { background: #4b5c5f; }
.tasks .late { width: 30px; }
.tray { margin-left: auto; display: flex; align-items: center; }
.chev { width: 9px; height: 9px; margin-right: 6px; }
.net { width: 12px; height: 12px; margin-right: 4px; }
.vol { width: 12px; height: 12px; }
.lang { font-size: 8.500px; margin-left: 6px; width: 24px; letter-spacing: -.3px; }
.date { width: 38px; display: flex; flex-direction: column; align-items: center; font-size: 8px; line-height: 12px; letter-spacing: -.3px; }
.note { width: 12px; height: 12px; margin: 0 15px 0 13px; }
```
